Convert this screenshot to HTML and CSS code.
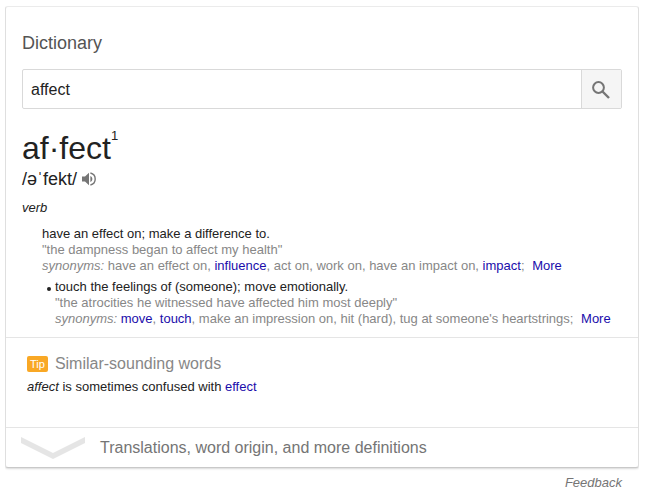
FILE: index.html
```html
<!DOCTYPE html>
<html lang="en">
<head>
<meta charset="utf-8">
<title>Dictionary</title>
<link rel="stylesheet" href="styles.css">
</head>
<body>
<main class="card">
  <section class="entry">
    <h1 class="title"><label for="word">Dictionary</label></h1>
    <form class="search">
      <input class="search-input" id="word" type="text" value="affect">
      <button class="search-button" type="button" aria-label="Search">
        <svg width="18" height="18" viewBox="0 0 18 18" fill="none" stroke="#757575" stroke-width="2"><circle cx="6.500" cy="6.500" r="5.400"/><path d="M10.500 10.500L17 17" stroke-width="2.400"/></svg>
      </button>
    </form>
    <h2 class="headword">af·fect<sup class="index">1</sup></h2>
    <div class="pronunciation">
      <span>/əˈfekt/</span>
      <button class="listen" type="button" aria-label="Listen">
        <svg width="14" height="14" viewBox="0 0 14 14"><path fill="#757575" d="M0 4.600h3L7 .7v12.600L3 9.400H0z"/><path fill="#757575" d="M8.400 4v6c1.200-.5 1.900-1.600 1.900-3S9.600 4.500 8.400 4z"/><path fill="none" stroke="#757575" stroke-width="1.400" d="M8.400 1C11.400 1.700 13.200 4.100 13.200 7s-1.800 5.300-4.800 6"/></svg>
      </button>
    </div>
    <p class="speech">verb</p>
    <div class="sense">
      <p>have an effect on; make a difference to.</p>
      <p class="muted">"the dampness began to affect my health"</p>
      <p class="muted"><i>synonyms:</i> have an effect on, <a href="#">influence</a>, act on, work on, have an impact on, <a href="#">impact</a>; <a class="more" href="#">More</a></p>
    </div>
    <ul class="subsenses">
      <li class="subsense">
        <p>touch the feelings of (someone); move emotionally.</p>
        <p class="muted">"the atrocities he witnessed have affected him most deeply"</p>
        <p class="muted"><i>synonyms:</i> <a href="#">move</a>, <a href="#">touch</a>, make an impression on, hit (hard), tug at someone's heartstrings; <a class="more" href="#">More</a></p>
      </li>
    </ul>
  </section>
  <section class="tip">
    <h3 class="tip-title"><span class="tip-badge">Tip</span>Similar-sounding words</h3>
    <p><i>affect</i> is sometimes confused with <a href="#">effect</a></p>
  </section>
  <button class="expand" type="button">
    <svg width="64" height="22" viewBox="0 0 64 22"><path fill="#e5e5e5" d="M0 0l32 16L64 0v6L32 22 0 6z"/></svg>
    <span>Translations, word origin, and more definitions</span>
  </button>
</main>
<footer class="footer"><a class="feedback" href="#">Feedback</a></footer>
</body>
</html>
```
FILE: styles.css
```css
* {
  box-sizing: border-box;
}

body {
  margin: 6px 10px 0 5px;
  background: #fff;
  color: #222;
  font: 13px/16px "Liberation Sans", Arial, sans-serif;
}

h1, h2, h3, p, ul {
  margin: 0;
  padding: 0;
  font-weight: normal;
}

a {
  color: #1a0dab;
  text-decoration: none;
}

button {
  margin: 0;
  padding: 0;
  border: 0;
  background: none;
  font: inherit;
  cursor: pointer;
}

.card {
  border: 1px solid #dfdfdf;
  border-top-color: #ebebeb;
  border-bottom-color: #c9c9c9;
  border-radius: 3px;
  box-shadow: 0 1px 2px rgba(0, 0, 0, 0.15);
  background: #fff;
}

.entry {
  padding: 26px 16px 10px;
}

.title {
  color: #545454;
  font-size: 18px;
  line-height: 20px;
}

.search {
  display: flex;
  height: 40px;
  margin-top: 16px;
  border: 1px solid #d9d9d9;
  border-radius: 2px;
}

.search-input {
  flex: 1;
  min-width: 0;
  padding: 2px 8px 0;
  border: 0;
  background: none;
  color: #222;
  font: 16px "Liberation Sans", Arial, sans-serif;
}

.search-button {
  display: flex;
  align-items: center;
  justify-content: center;
  width: 40px;
  padding: 2px 2px 0 0;
  border-left: 1px solid #d9d9d9;
  background: #f5f5f5;
}

.headword {
  display: flex;
  margin-top: 19px;
  font-size: 32px;
  line-height: 40px;
}

.index {
  font-size: 13px;
  line-height: 16px;
}

.pronunciation {
  display: flex;
  align-items: center;
  gap: 5px;
  margin-top: 1px;
  font-size: 18px;
  line-height: 20px;
}

.listen {
  display: flex;
}

.speech {
  margin-top: 11px;
  font-style: italic;
}

.sense {
  margin: 10px 0 5px 20px;
}

.subsenses {
  margin-left: 33px;
  list-style: none;
}

.subsense {
  position: relative;
}

.subsense::before {
  content: "";
  position: absolute;
  top: 8px;
  left: -8px;
  width: 4px;
  height: 4px;
  border-radius: 50%;
  background: #222;
}

.muted {
  color: #878787;
}

.more {
  margin-left: 4px;
}

.tip {
  padding: 16px 21px 32px;
  border-top: 1px solid #e5e5e5;
}

.tip-title {
  display: flex;
  align-items: center;
  gap: 7px;
  margin-bottom: 5px;
  color: #878787;
  font-size: 16px;
  line-height: 20px;
}

.tip-badge {
  padding: 0 3px;
  border-radius: 2px;
  background: #f9a825;
  color: #fff;
  font-size: 11px;
  line-height: 16px;
}

.expand {
  display: flex;
  align-items: center;
  gap: 15px;
  width: 100%;
  height: 40px;
  padding-left: 15px;
  border-top: 1px solid #e5e5e5;
  color: #757575;
  font-size: 16px;
}

.footer {
  padding: 7px 17px 0 0;
  text-align: right;
}

.feedback {
  color: #757575;
  font-style: italic;
}
```
